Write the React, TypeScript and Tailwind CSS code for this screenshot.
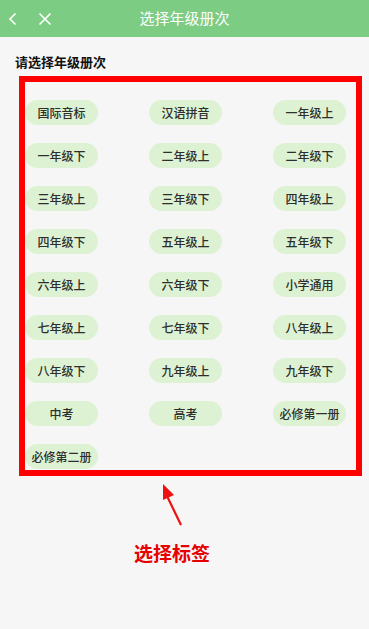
import React from "react";

const items = [
  "国际音标", "汉语拼音", "一年级上",
  "一年级下", "二年级上", "二年级下",
  "三年级上", "三年级下", "四年级上",
  "四年级下", "五年级上", "五年级下",
  "六年级上", "六年级下", "小学通用",
  "七年级上", "七年级下", "八年级上",
  "八年级下", "九年级上", "九年级下",
  "中考", "高考", "必修第一册",
  "必修第二册",
];

function Chip({ label }: { label: string }) {
  return (
    <div className="w-[73px] h-[25px] rounded-full bg-[#dcf2d2] flex items-center justify-center text-[12px] font-medium text-[#2e2e2e] leading-none whitespace-nowrap">
      {label}
    </div>
  );
}

export default function App() {
  const rows: string[][] = [];
  for (let i = 0; i < items.length; i += 3) rows.push(items.slice(i, i + 3));
  return (
    <div
      className="w-[369px] h-[629px] bg-[#f6f6f6] flex flex-col"
      style={{ fontFamily: '"Noto Sans CJK SC", "Noto Sans", sans-serif' }}
    >
      <div className="h-[37px] bg-[#7dcc84] flex items-center relative shrink-0">
        <div className="flex items-center pl-[8px] gap-[20px]">
          <svg width="10" height="14" viewBox="0 0 10 14">
            <path d="M7.5 1.5 L2 7 L7.5 12.5" stroke="white" strokeWidth="1.6" fill="none" />
          </svg>
          <svg width="14" height="14" viewBox="0 0 14 14">
            <path d="M1.5 1.5 L12.5 12.5 M12.5 1.5 L1.5 12.5" stroke="white" strokeWidth="1.6" fill="none" />
          </svg>
        </div>
        <div className="absolute inset-0 flex items-center justify-center text-white text-[15px] pointer-events-none">
          选择年级册次
        </div>
      </div>
      <div className="pl-[15px] pt-[15px] text-[13px] font-bold text-[#111111] leading-[20px]">
        请选择年级册次
      </div>
      <div className="ml-[19px] mt-[4px] w-[343px] border-[6px] border-[#ff0000] pt-[18px] pb-[1px] pl-[0px] pr-[10px] flex flex-col gap-[18px]">
        {rows.map((r, i) => (
          <div key={i} className={r.length === 3 ? "flex justify-between" : "flex"}>
            {r.map((l) => (
              <Chip key={l} label={l} />
            ))}
          </div>
        ))}
      </div>
      <div className="relative h-[60px]">
        <svg className="absolute left-[150px] top-[4px]" width="40" height="50" viewBox="0 0 40 50">
          <path d="M31 45 L17 16" stroke="#ee1111" strokeWidth="2.2" fill="none" />
          <path d="M13 4 L24 15 L13 20 Z" fill="#ee1111" />
        </svg>
      </div>
      <div className="pl-[134px] pt-[5px] text-[19px] font-bold text-[#e60000] leading-[24px]">
        选择标签
      </div>
    </div>
  );
}
